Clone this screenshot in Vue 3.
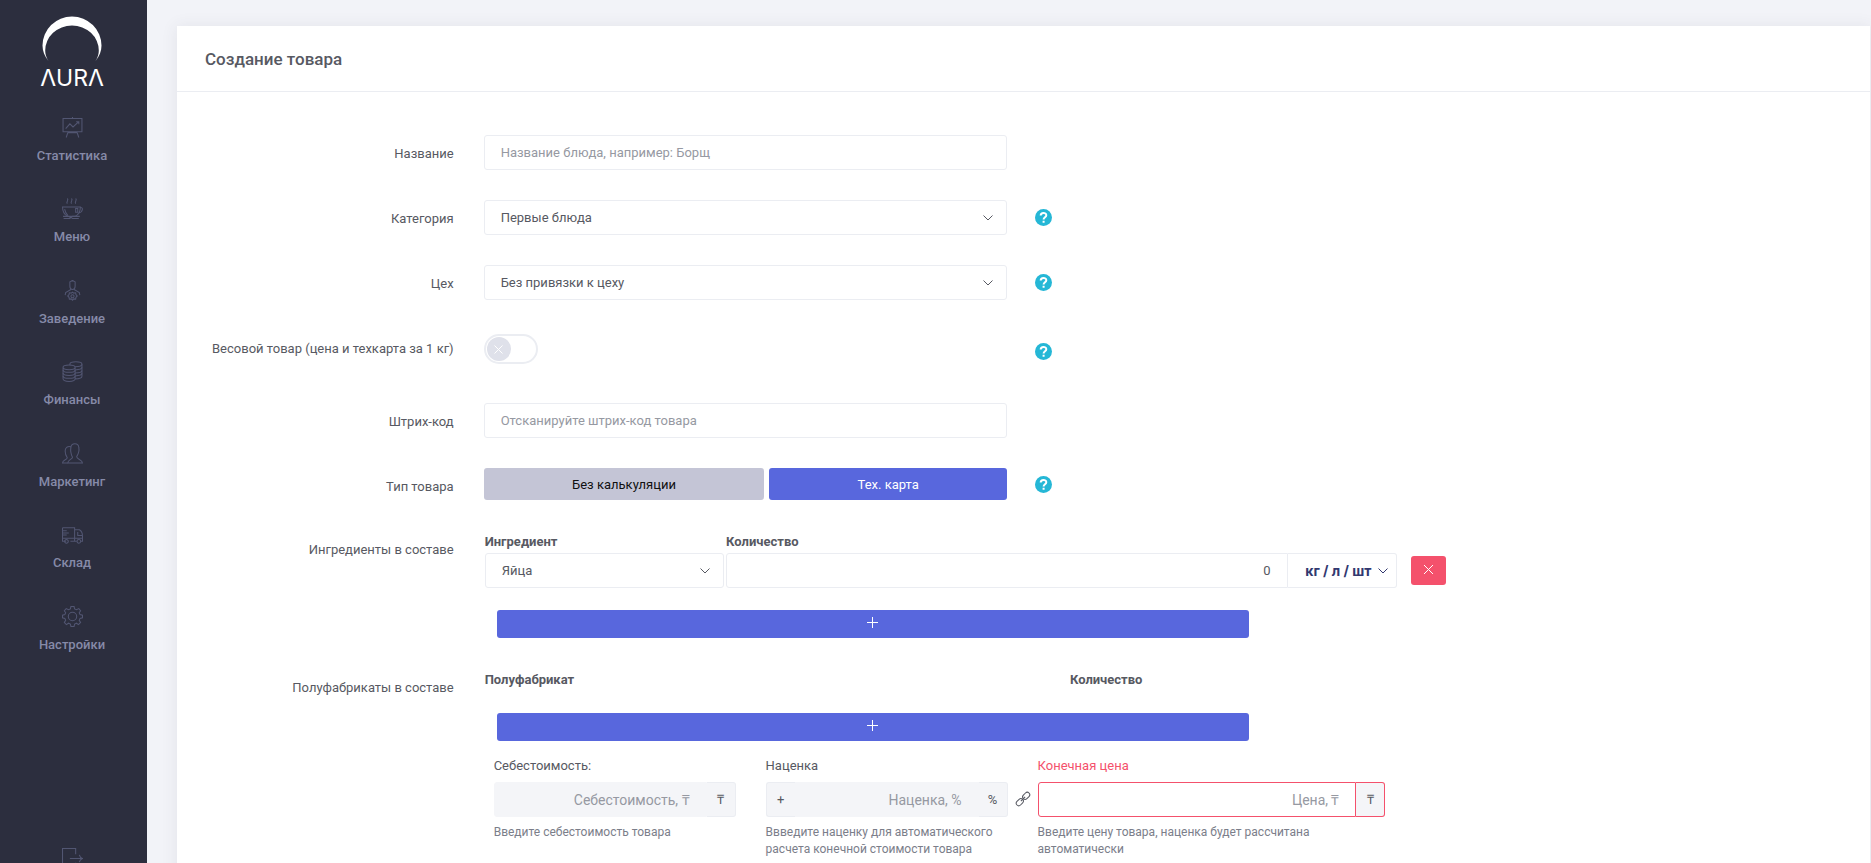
<script setup>
import { ref } from 'vue'

const nav = [
  { label: 'Статистика', icon: 'stats' },
  { label: 'Меню', icon: 'cup' },
  { label: 'Заведение', icon: 'place' },
  { label: 'Финансы', icon: 'coins' },
  { label: 'Маркетинг', icon: 'users' },
  { label: 'Склад', icon: 'truck' },
  { label: 'Настройки', icon: 'gear' }
]

const icons = {
  stats: ['M.5 1.5h19M1 1.5v12.5h18V1.5M10 0v1.5M5.5 15h9M5.500 15l-1.500 4.500M14.500 15l1.500 4.500', 'M3.500 11l4-4.500 3 3L16 4.500M13.500 4.500H16V7'],
  cup: ['M.5 8.500h17c0 4-2 7.500-5 9h-7c-3-1.500-5-5-5-9zM17.500 9c3-.5 2.500 4.500-1.800 5.500M2.500 10.500c.5 2.500 1.500 4.500 3 6', 'M13 10h2v3.500h-2zM1 17.500h5l2 1 2-1h7M1.500 19.500h6l1-1 1.500 1h6', 'M5 .5c2 1.500-1.500 3 0 5M9 .5c2 1.500-1.500 3 0 5M13 .5c2 1.500-1.500 3 0 5'],
  place: ['M7.500 2c0-1.500 5-1.500 5 0v4c0 2-1 3-2.500 3S7.500 8 7.500 6zM9 .5h2M8.500 9l-5 3-.5 2.500M11.500 9l5 3 .5 2.500', 'M10 11.500l1.200 1 1.800-.3.300 1.800 1.200 1.200-1.200 1.300-.3 1.700-1.800-.2-1.200 1.200-1.200-1.200-1.800.2-.3-1.700L5.500 15.200 6.700 14l.3-1.800 1.800.3z', 'M8.500 15.500a1.500 1.500 0 1 0 3 0a1.500 1.500 0 1 0-3 0'],
  coins: ['M7.500 3c0-3 11.500-3 11.500 0v11.500c0 1.500-2.500 2.500-6.500 2.500M1 6c0-3 11.500-3 11.500 0S1 9 1 6zM1 6v11c0 3.300 11.500 3.300 11.500 0V6', 'M1 8.500c0 3 11.500 3 11.500 0M1 11.500c0 3 11.500 3 11.500 0M1 14.200c0 3 11.500 3 11.500 0M12.500 5.500c4-.2 6.500-1 6.500-2.500M12.500 8.500c4-.2 6.500-1 6.500-2.500M12.500 11.500c4-.2 6.500-1 6.500-2.500M12.500 14.200c4-.2 6.500-1 6.500-2.500M7.500 3v1'],
  users: ['M5.500 19c0-3 4.500-3.500 4.500-5.500C8 10 8 7 8.500 4c.5-4.500 7-4.500 7.500 0 .5 3 0 6-2 9 0 2.500 5.500 3 5.500 6z', 'M8.500 3.500C5 2.500 3 5 3 7.500c0 3 1 5 2 6.500 0 2-4.500 2-4.500 5h5'],
  truck: ['M.5 3.500h11.500v13H8M4 16.500H.5v-13M12 5.500h4.500c2 1 3 4 3 6v5H18M14 16.500h-2M.5 13.500H12M15 7.500v3.500h4.500M12 13.500h7.500', 'M2.500 16.500a1.700 1.700 0 1 0 3.500 0a1.700 1.700 0 1 0-3.500 0M14.300 16.500a1.700 1.700 0 1 0 3.500 0a1.700 1.700 0 1 0-3.500 0M.5 6.500h4M.5 8.500h6M.5 10.500h4'],
  gear: ['M8.500.5h3l.5 2.300 1.800.8L16 2.500 17.700 4.500l-1.300 2 .8 1.700 2.300.5v2.600l-2.300.5-.8 1.900 1.300 2-2 2-1.900-1.300-1.800.8-.5 2.300h-3L8 17.200l-1.800-.8-2 1.300-2-2 1.300-2-.8-1.900L.5 11.300V8.700l2.200-.5.8-1.700-1.300-2L4 2.500l2.200 1.100L8 2.800z', 'M6 10a4 4 0 1 0 8 0a4 4 0 1 0-8 0']
}

const name = ref('')
const category = ref('Первые блюда')
const workshop = ref('Без привязки к цеху')
const byWeight = ref(false)
const barcode = ref('')
const ingredient = ref('Яйца')
const amount = ref('0')
const cost = ref('')
const markup = ref('')
const price = ref('')
</script>

<template>
  <div class="app">
    <aside class="sidebar">
      <a class="logo" href="#" aria-label="AURA">
        <svg class="crescent" width="60" height="46" viewBox="0 0 60 46" aria-hidden="true">
          <path d="M6.500 45C2.500 40 .5 35 .5 29.500a29.500 29 0 0 1 59 0C59.500 35 57.500 40 53.500 45C56 41 56.800 38 56.800 34.500a26.800 25 0 0 0-53.600 0C3.200 38 4 41 6.500 45z" fill="#fff" />
        </svg>
        <span class="wordmark">ΛURΛ</span>
      </a>
      <nav class="nav">
        <a v-for="item in nav" :key="item.icon" class="nav-item" href="#">
          <svg width="21" height="21" viewBox="0 0 20 20" aria-hidden="true">
            <path v-for="(d, i) in icons[item.icon]" :key="i" :d="d" />
          </svg>
          <span>{{ item.label }}</span>
        </a>
      </nav>
      <a class="nav-item logout" href="#" aria-label="Выход">
        <svg width="21" height="21" viewBox="0 0 20 20" aria-hidden="true">
          <path d="M13 6V.5H.5v19H13V14M7.500 10h12M16.500 6.500c.5 2 1.500 3 3 3.500-1.500.5-2.500 1.500-3 3.500" />
        </svg>
      </a>
    </aside>

    <main class="main">
      <section class="card">
        <header class="card-head"><h1>Создание товара</h1></header>
        <form class="card-body" @submit.prevent>
          <div class="row">
            <label class="label" for="name">Название</label>
            <input id="name" v-model="name" class="control" type="text" placeholder="Название блюда, например: Борщ">
          </div>

          <div class="row">
            <label class="label" for="category">Категория</label>
            <div class="select">
              <select id="category" v-model="category" class="control"><option>Первые блюда</option></select>
              <svg width="10" height="6" viewBox="0 0 10 6" aria-hidden="true"><path d="M.5.5L5 5 9.500.5" /></svg>
            </div>
            <button class="help" type="button" aria-label="Подсказка">
              <svg width="17" height="17" viewBox="0 0 17 17"><circle cx="8.500" cy="8.500" r="8.500" /><path d="M5.700 6.600C5.700 3.200 11.300 3.200 11.300 6.200c0 2-2.700 2-2.700 4.300M8.600 11.800v2" /></svg>
            </button>
          </div>

          <div class="row">
            <label class="label" for="workshop">Цех</label>
            <div class="select">
              <select id="workshop" v-model="workshop" class="control"><option>Без привязки к цеху</option></select>
              <svg width="10" height="6" viewBox="0 0 10 6" aria-hidden="true"><path d="M.5.5L5 5 9.500.5" /></svg>
            </div>
            <button class="help" type="button" aria-label="Подсказка">
              <svg width="17" height="17" viewBox="0 0 17 17"><circle cx="8.500" cy="8.500" r="8.500" /><path d="M5.700 6.600C5.700 3.200 11.300 3.200 11.300 6.200c0 2-2.700 2-2.700 4.300M8.600 11.800v2" /></svg>
            </button>
          </div>

          <div class="row row-switch">
            <label class="label" for="weight">Весовой товар (цена и техкарта за 1 кг)</label>
            <div class="switch">
              <input id="weight" v-model="byWeight" type="checkbox">
              <span class="knob">
                <svg width="9" height="9" viewBox="0 0 9 9" aria-hidden="true"><path d="M.5.5l8 8M8.500.5l-8 8" /></svg>
              </span>
            </div>
            <button class="help" type="button" aria-label="Подсказка">
              <svg width="17" height="17" viewBox="0 0 17 17"><circle cx="8.500" cy="8.500" r="8.500" /><path d="M5.700 6.600C5.700 3.200 11.300 3.200 11.300 6.200c0 2-2.700 2-2.700 4.300M8.600 11.800v2" /></svg>
            </button>
          </div>

          <div class="row">
            <label class="label" for="barcode">Штрих-код</label>
            <input id="barcode" v-model="barcode" class="control" type="text" placeholder="Отсканируйте штрих-код товара">
          </div>

          <div class="row">
            <span id="type-label" class="label">Тип товара</span>
            <div class="types" role="group" aria-labelledby="type-label">
              <button class="btn muted" type="button">Без калькуляции</button>
              <button class="btn primary" type="button">Тех. карта</button>
            </div>
            <button class="help" type="button" aria-label="Подсказка">
              <svg width="17" height="17" viewBox="0 0 17 17"><circle cx="8.500" cy="8.500" r="8.500" /><path d="M5.700 6.600C5.700 3.200 11.300 3.200 11.300 6.200c0 2-2.700 2-2.700 4.300M8.600 11.800v2" /></svg>
            </button>
          </div>

          <div class="row wide">
            <span class="label">Ингредиенты в составе</span>
            <div>
              <div class="parts">
                <div class="part-name">
                  <label class="head" for="ingredient">Ингредиент</label>
                  <div class="select">
                    <select id="ingredient" v-model="ingredient" class="control"><option>Яйца</option></select>
                    <svg width="10" height="6" viewBox="0 0 10 6" aria-hidden="true"><path d="M.5.5L5 5 9.500.5" /></svg>
                  </div>
                </div>
                <div class="part-amount">
                  <label class="head" for="amount">Количество</label>
                  <div class="group">
                    <input id="amount" v-model="amount" class="control" type="text" inputmode="decimal">
                    <button class="unit" type="button">
                      кг / л / шт
                      <svg width="10" height="6" viewBox="0 0 10 6" aria-hidden="true"><path d="M.5.5L5 5 9.500.5" /></svg>
                    </button>
                  </div>
                </div>
                <button class="remove" type="button" aria-label="Удалить">
                  <svg width="11" height="11" viewBox="0 0 11 11" aria-hidden="true"><path d="M1 1l9 9M10 1l-9 9" /></svg>
                </button>
              </div>
              <button class="add" type="button" aria-label="Добавить ингредиент">
                <svg width="11" height="11" viewBox="0 0 11 11" aria-hidden="true"><path d="M5.500 0v11M0 5.500h11" /></svg>
              </button>
            </div>
          </div>

          <div class="row wide">
            <span class="label">Полуфабрикаты в составе</span>
            <div>
              <div class="semi">
                <span class="head">Полуфабрикат</span>
                <span class="head">Количество</span>
              </div>
              <button class="add" type="button" aria-label="Добавить полуфабрикат">
                <svg width="11" height="11" viewBox="0 0 11 11" aria-hidden="true"><path d="M5.500 0v11M0 5.500h11" /></svg>
              </button>

              <div class="prices">
                <div class="price">
                  <label for="cost">Себестоимость:</label>
                  <div class="group filled">
                    <input id="cost" v-model="cost" class="control" type="text" placeholder="Себестоимость, ₸">
                    <span class="addon">₸</span>
                  </div>
                  <p>Введите себестоимость товара</p>
                </div>
                <div class="price">
                  <label for="markup">Наценка</label>
                  <div class="group filled">
                    <span class="addon first">+</span>
                    <input id="markup" v-model="markup" class="control" type="text" placeholder="Наценка, %">
                    <span class="addon">%</span>
                    <svg class="link" width="14" height="14" viewBox="0 0 14 14" aria-hidden="true">
                      <g transform="rotate(-45 7 7)">
                        <rect x="-1.500" y="4.500" width="8" height="5" rx="2.500" />
                        <rect x="7.500" y="4.500" width="8" height="5" rx="2.500" />
                        <path d="M4 7h6" />
                      </g>
                    </svg>
                  </div>
                  <p>Ввведите наценку для автоматического расчета конечной стоимости товара</p>
                </div>
                <div class="price error">
                  <label for="price">Конечная цена</label>
                  <div class="group">
                    <input id="price" v-model="price" class="control" type="text" placeholder="Цена, ₸">
                    <span class="addon">₸</span>
                  </div>
                  <p>Введите цену товара, наценка будет рассчитана автоматически</p>
                </div>
              </div>
            </div>
          </div>
        </form>
      </section>
    </main>
  </div>
</template>

<style>
body {
  background: #f2f3f8;
}
</style>

<style scoped>
.app {
  display: flex;
  height: 100vh;
  overflow: hidden;
  font: 400 13px/19px Roboto, "Liberation Sans", sans-serif;
  color: #575962;
}
.app *,
.app *::before {
  box-sizing: border-box;
}
button,
input,
select {
  font: inherit;
  color: inherit;
  margin: 0;
}
button {
  border: 0;
  padding: 0;
  cursor: pointer;
}
svg {
  display: block;
  fill: none;
  stroke: currentColor;
}

.sidebar {
  flex: 0 0 147px;
  overflow: hidden;
  background: #2c2e3e;
  padding-right: 3px;
}
.logo {
  display: flex;
  flex-direction: column;
  align-items: center;
  height: 92px;
  padding-top: 16px;
  color: #fff;
  text-decoration: none;
}
.crescent {
  flex: none;
  stroke: none;
}
.wordmark {
  font: 400 23px/32px Inter, sans-serif;
}
.nav {
  display: grid;
  grid-auto-rows: 1fr;
  height: 570px;
}
.nav-item {
  display: flex;
  flex-direction: column;
  align-items: center;
  gap: 9px;
  padding-top: 25px;
  color: #868aa8;
  font-weight: 500;
  line-height: 18px;
  text-decoration: none;
}
.nav-item svg {
  color: #525672;
  flex: none;
}
.logout {
  margin-top: 161px;
}

.main {
  flex: 1;
  min-width: 0;
  overflow-y: auto;
  scrollbar-width: none;
  padding: 26px 1px 0 30px;
}
.card {
  background: #fff;
  min-height: 100%;
  box-shadow: 0 1px 15px 1px rgba(69, 65, 78, 0.08);
}
.card-head {
  display: flex;
  align-items: center;
  height: 66px;
  padding: 0 28px;
  border-bottom: 1px solid #ebedf2;
}
.card-head h1 {
  margin: 0;
  font-size: 17px;
  font-weight: 500;
  line-height: 24px;
}
.card-body {
  display: flex;
  flex-direction: column;
  gap: 30px;
  padding: 43px 18px 30px 15px;
}
.row {
  display: grid;
  grid-template-columns: 2fr 4fr 6fr;
  align-items: start;
}
.row > * {
  margin: 0 15px;
}
.row.wide {
  grid-template-columns: 2fr 10fr;
}
.row-switch {
  min-height: 43px;
}
.label {
  padding-top: 9px;
  text-align: right;
}
.control {
  display: block;
  width: 100%;
  min-width: 0;
  height: 35px;
  padding: 0 16px;
  border: 1px solid #ebedf2;
  border-radius: 3px;
  background: #fff;
  appearance: none;
  outline: none;
}
.control::placeholder {
  color: #9699a2;
  opacity: 1;
}
.select {
  position: relative;
}
.row > .select,
.row > .control {
  width: auto;
}
.select svg {
  position: absolute;
  right: 14px;
  top: 15px;
  pointer-events: none;
}
.row > .help {
  align-self: center;
  justify-self: start;
  margin-left: 13px;
  background: none;
}
.help svg {
  stroke: #fff;
  stroke-width: 2;
}
.help circle {
  fill: #25b7d6;
  stroke: none;
}

.switch {
  position: relative;
  width: 54px;
  padding-top: 4px;
}
.switch input {
  display: block;
  width: 54px;
  height: 30px;
  border: 2px solid #ebedf2;
  border-radius: 15px;
  appearance: none;
}
.knob {
  position: absolute;
  left: 3px;
  top: 7px;
  width: 24px;
  height: 24px;
  display: grid;
  place-items: center;
  border-radius: 50%;
  background: #dfe1ea;
  color: #fff;
  pointer-events: none;
}
.switch input:checked + .knob {
  left: 27px;
}

.types {
  display: flex;
  gap: 5px;
  padding-bottom: 1px;
}
.btn {
  height: 32px;
  border-radius: 3px;
}
.muted {
  flex: 281;
  background: #c4c5d6;
  color: #111;
}
.primary {
  flex: 238;
  background: #5867dd;
  color: #fff;
}

.head {
  display: block;
  height: 22px;
  line-height: 22px;
  font-weight: 700;
}
.parts {
  display: flex;
  align-items: flex-end;
  gap: 2px;
  width: 71%;
  margin-left: 1px;
}
.part-name {
  flex: 240;
}
.part-amount {
  flex: 672;
}
.group {
  position: relative;
  display: flex;
}
.group .control {
  flex: 1;
  text-align: right;
}
.group .control:first-child {
  border-radius: 3px 0 0 3px;
}
.unit {
  display: flex;
  align-items: center;
  justify-content: flex-end;
  gap: 6px;
  width: 109px;
  padding-right: 8px;
  border: 1px solid #ebedf2;
  border-left: 0;
  border-radius: 0 3px 3px 0;
  background: #fff;
  color: #32386f;
  font: 700 14px/19px Inter, "Open Sans", sans-serif;
}
.remove {
  display: grid;
  place-items: center;
  width: 35px;
  height: 29px;
  margin: 0 0 3px 12px;
  padding-bottom: 3px;
  border-radius: 3px;
  background: #f4516c;
  color: #fff;
}
.add {
  display: grid;
  place-items: center;
  width: 55.6%;
  height: 28px;
  margin: 22px 0 1px 13px;
  padding-bottom: 4px;
  border-radius: 3px;
  background: #5867dd;
  color: #fff;
}
.semi {
  display: grid;
  grid-template-columns: 586fr 768fr;
  margin-left: 1px;
}

.prices {
  display: grid;
  grid-template-columns: 242fr 242fr 348fr;
  gap: 30px;
  width: 65.9%;
  margin: 15px 0 0 10px;
}
.price label {
  display: block;
  line-height: 20px;
  margin-bottom: 6px;
}
.price p {
  margin: 7px 0 0;
  color: #7b7e8a;
  font-size: 12px;
  line-height: 17px;
}
.price .control {
  padding: 0 16px;
  font-size: 14px;
}
.addon {
  display: grid;
  place-items: center;
  flex: 0 0 29px;
  border: 1px solid #ebedf2;
  border-left: 0;
  border-radius: 0 3px 3px 0;
  background: #f4f5f8;
}
.addon.first {
  border-left: 1px solid #ebedf2;
  border-right: 0;
  border-radius: 3px 0 0 3px;
}
.filled .control {
  border-color: #f4f5f8;
  border-radius: 0;
  background: #f4f5f8;
}
.link {
  position: absolute;
  left: calc(100% + 8px);
  top: 10px;
  overflow: visible;
}
.error label {
  color: #f4516c;
}
.error .control,
.error .addon {
  border-color: #f4516c;
}
.error p {
  max-width: 290px;
}
</style>
